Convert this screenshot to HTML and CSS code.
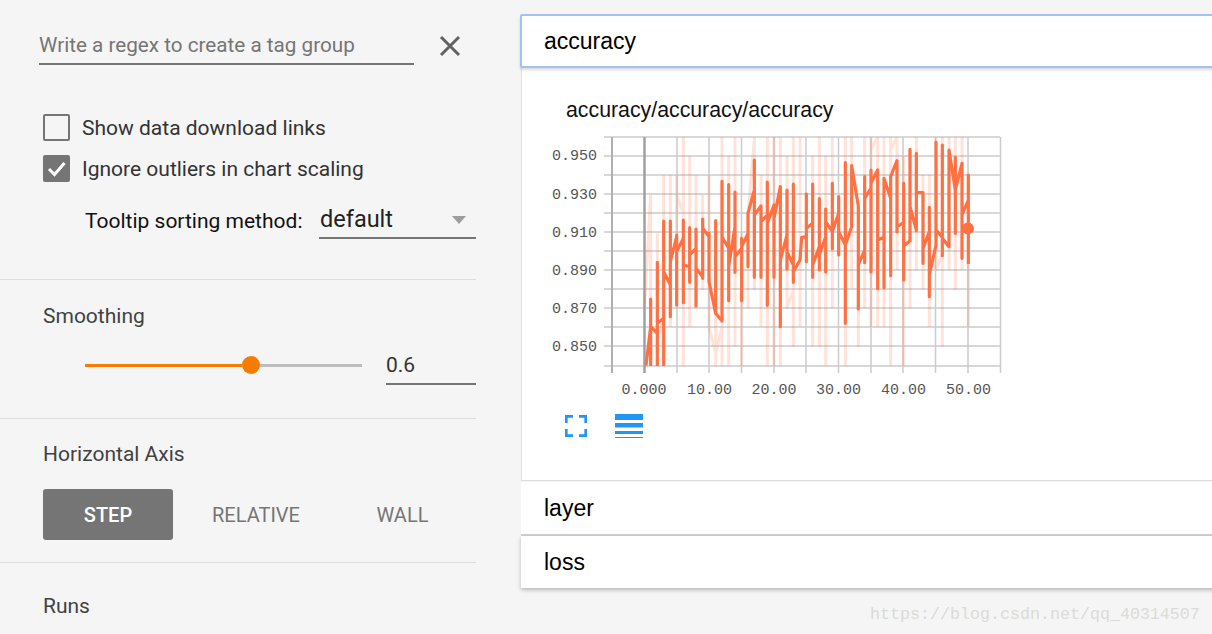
FILE: index.html
```html
<!DOCTYPE html>
<html lang="en">
<head>
<meta charset="utf-8">
<title>TensorBoard scalars</title>
<link rel="stylesheet" href="styles.css">
</head>
<body>
<div class="page">
  <aside class="sidebar">
    <section class="sec sec-top">
      <div class="regex-row">
        <div class="regex-input">Write a regex to create a tag group</div>
        <svg class="close" viewBox="0 0 24 24" width="24" height="24"><path d="M3 3 21 21M21 3 3 21"/></svg>
      </div>
      <label class="check"><span class="box"></span><span>Show data download links</span></label>
      <label class="check check-2"><span class="box box-on"><svg viewBox="0 0 27 27" width="27" height="27"><path d="M6 14 11.500 19.500 21.500 8"/></svg></span><span>Ignore outliers in chart scaling</span></label>
      <div class="tooltip-row">
        <span class="tooltip-label">Tooltip sorting method:</span>
        <div class="select"><span>default</span><i class="arrow"></i></div>
      </div>
    </section>
    <section class="sec sec-smooth">
      <h3>Smoothing</h3>
      <div class="slider-row">
        <div class="slider"><div class="fill"></div><div class="knob"></div><div class="rest"></div></div>
        <div class="num">0.6</div>
      </div>
    </section>
    <section class="sec sec-axis">
      <h3>Horizontal Axis</h3>
      <div class="toggle">
        <span class="btn on">STEP</span>
        <span class="btn rel">RELATIVE</span>
        <span class="btn wall">WALL</span>
      </div>
    </section>
    <section class="sec-runs"><h3>Runs</h3></section>
  </aside>
  <main class="main">
    <div class="cat cat-open">accuracy</div>
    <div class="chart-card">
      <div class="chart-title">accuracy/accuracy/accuracy</div>
      <svg class="chart" viewBox="540 120 470 290" width="470" height="290">
        <defs><clipPath id="plot"><rect x="612" y="137" width="389" height="229"/></clipPath></defs>
        <path class="grid" d="M604 137H1000M604 156H1000M604 175H1000M604 194H1000M604 213H1000M604 232H1000M604 251H1000M604 270H1000M604 289H1000M604 308H1000M604 327H1000M604 346H1000M604 366H1000M677 137V373M709 137V373M741.500 137V373M774 137V373M806 137V373M838.500 137V373M871 137V373M903 137V373M935.500 137V373M968 137V373M1000.500 137V373"/>
        <path class="axis" d="M612 137V373"/>
        <path class="axis-zero" d="M644.500 137V373"/>
        <g clip-path="url(#plot)">
          <g transform="translate(540 120) scale(.33333)">
            <path class="raw" d="M332 225V737M352 340V737M371 165V737M391 165V620M410 165V565M430 50V737M449 108V620M468 165V565M488 225V510M507 165V620M527 300V737M546 50V737M566 108V737M585 50V680M605 340V737M624 280V565M643 50V510M663 165V620M682 50V737M702 50V737M721 50V737M741 108V565M760 50V680M780 50V620M818 108V680M838 50V680M857 108V737M877 50V565M916 50V737M935 50V505M955 258V680M974 50V565M993 50V620M1013 50V620M1032 50V620M1052 50V737M1071 50V450M1091 108V737M1110 88V565M1129 50V450M1149 165V510M1168 165V620M1188 50V450M1207 50V680M1227 50V450M1246 50V510M1266 50V450M1285 165V620M313 560 332 225M352 660 371 600M410 225 430 280M507 620 527 700 546 620M624 280 643 60M740 565 760 510M993 90 1013 50M1052 90 1071 50M1188 450 1207 400"/>
            <path class="smooth" d="M318 737 332 620V537V737V620L352 640V427V737V610L371 595V303V737V455L391 495V303V590V425L410 350V345V555V395L430 355V300V548V435L449 440V323V487V405L468 385V327V558V445L488 470V297V475V325L507 350V340V485L527 580V302V580L546 603V184V603V350L566 385V194V542V440L585 320V216V457V410L605 385V355V542V380L624 340V280V440V280L643 210V120V472V285L663 258V472V305L682 285V186V556V310L702 255V472V295L721 200V620V420L741 345V210V447V395L760 435V192V487V455L780 420L785 352 799 350V222V425V325L818 310V192V472V435L838 380V236V450V405L857 350V267V456V305L877 335V190V386V335L896 280V230V405V335L916 375V128V610V375L935 320V137V322V137L955 258V567V435L974 390V170V428V235L993 205V150V456V190L1013 150V506V360L1032 352V175V503V175L1052 235V170V467V170L1071 122V336V320L1091 308V190V480V378L1110 362V88V260L1129 330V100V332V218L1149 218V430V385L1168 335V262V530V465L1188 375V67V330L1207 352V75V407V355L1227 380V90L1246 210V112V340V210L1266 130V415V285L1285 240V165V432"/>
          </g>
        </g>
        <circle class="dot" cx="968" cy="228.500" r="6"/>
        <text class="tick" x="597" y="160" text-anchor="end">0.950</text>
        <text class="tick" x="597" y="199" text-anchor="end">0.930</text>
        <text class="tick" x="597" y="237" text-anchor="end">0.910</text>
        <text class="tick" x="597" y="275" text-anchor="end">0.890</text>
        <text class="tick" x="597" y="313" text-anchor="end">0.870</text>
        <text class="tick" x="597" y="351" text-anchor="end">0.850</text>
        <text class="tick" x="644" y="394" text-anchor="middle">0.000</text>
        <text class="tick" x="709.500" y="394" text-anchor="middle">10.00</text>
        <text class="tick" x="774" y="394" text-anchor="middle">20.00</text>
        <text class="tick" x="838.500" y="394" text-anchor="middle">30.00</text>
        <text class="tick" x="903.500" y="394" text-anchor="middle">40.00</text>
        <text class="tick" x="968.500" y="394" text-anchor="middle">50.00</text>
      </svg>
      <div class="chart-tools">
        <svg class="icon-full" viewBox="0 0 22 22" width="22" height="22"><path d="M1.300 8V1.300H8M14 1.300H20.700V8M20.700 14V20.700H14M8 20.700H1.300V14"/></svg>
        <svg class="icon-list" viewBox="0 0 28 24" width="28" height="24"><path d="M0 0H28V6H0ZM0 9H28V13.500H0ZM0 17H28V20H0ZM0 23H28V24.500H0Z"/></svg>
      </div>
    </div>
    <div class="cat cat-layer">layer</div>
    <div class="cat cat-loss">loss</div>
    <div class="watermark">https://blog.csdn.net/qq_40314507</div>
  </main>
</div>
</body>
</html>
```
FILE: styles.css
```css
* { box-sizing: border-box; }
html, body { margin: 0; height: 100%; }
body { background: #f5f5f5; overflow: hidden; font-family: Roboto, "Liberation Sans", sans-serif; }
.page { display: flex; width: 1212px; height: 634px; overflow: hidden; }

.sidebar { width: 476px; flex: none; color: #333; }
.sec { border-bottom: 1px solid #ddd; }
h3 { margin: 0; font-size: 21px; font-weight: 400; line-height: 24px; color: #424242; }

.sec-top { height: 280px; padding-top: 26px; }
.regex-row { display: flex; align-items: flex-start; margin-left: 39px; }
.regex-input { width: 375px; height: 39px; border-bottom: 2px solid #757575; font-size: 20.700px; line-height: 38px; color: #757575; }
.close { margin: 8px 0 0 24px; }
.close path { stroke: #616161; stroke-width: 3; fill: none; }

.check { display: flex; align-items: center; gap: 12px; margin: 49px 0 0 43px; height: 27px; font-size: 21px; color: #333; }
.check-2 { margin-top: 14px; }
.box { width: 27px; height: 27px; border: 2.500px solid #757575; border-radius: 2px; flex: none; }
.box-on { background: #757575; border: 0; }
.box-on svg { display: block; }
.box-on path { stroke: #fff; stroke-width: 3; fill: none; }

.tooltip-row { display: flex; align-items: flex-start; margin: 20px 0 0 85px; }
.tooltip-label { font-size: 21px; line-height: 28px; margin-top: 5px; color: #111; width: 234px; flex: none; }
.select { flex: 1; height: 37px; border-bottom: 2px solid #757575; display: flex; justify-content: space-between; font-size: 23.500px; line-height: 34px; color: #222; padding-left: 1px; padding-right: 10px; }
.arrow { width: 0; height: 0; margin-top: 14px; border: 7.500px solid transparent; border-top: 8px solid #9e9e9e; border-bottom: 0; }

.sec-smooth { height: 139px; padding: 24px 0 0 43px; }
.slider-row { display: flex; align-items: flex-start; margin: 22px 0 0 42px; }
.slider { width: 277px; height: 18px; display: flex; align-items: center; margin-top: 6px; }
.fill { width: 157px; height: 3px; background: #f57c00; }
.knob { width: 18px; height: 18px; border-radius: 50%; background: #f57c00; flex: none; }
.rest { flex: 1; height: 3px; background: #bdbdbd; }
.num { width: 90px; height: 35px; margin-left: 24px; border-bottom: 2px solid #757575; font-size: 21px; line-height: 31px; color: #333; }

.sec-axis { height: 144px; padding: 23px 0 0 43px; }
.toggle { display: flex; margin-top: 23px; font-size: 20px; font-weight: 400; color: #757575; }
.btn { height: 51px; line-height: 53px; text-align: center; }
.btn.on { width: 130px; background: #757575; color: #fff; border-radius: 3px; font-weight: 500; }
.btn.rel { width: 166px; }
.btn.wall { width: 127px; }

.sec-runs { padding: 31px 0 0 43px; }

.main { position: relative; width: 740px; margin-left: 45px; padding-top: 14px; font-family: "Liberation Sans", Arial, sans-serif; flex: none; }
.cat { background: #fff; color: #000; font-size: 23px; padding-left: 23px; height: 52px; line-height: 52px; }
.cat-open { height: 54px; margin-left: -1px; border: 2px solid #a3c0f7; border-radius: 2px 0 0 2px; padding-left: 22px; line-height: 50px; box-shadow: 0 2px 3px rgba(0,0,0,.15); position: relative; }
.chart-card { background: #fff; height: 413px; border-left: 1px solid #e0e0e0; border-bottom: 1px solid #ddd; padding: 29px 0 0 18px; }
.chart-title { margin-left: 26px; font-size: 21.300px; line-height: 26px; color: #111; height: 23px; }
.chart { display: block; }
.grid { stroke: #ccc; stroke-width: 1.500; fill: none; }
.axis { stroke: #b0b0b0; stroke-width: 2; fill: none; }
.axis-zero { stroke: #a0a0a0; stroke-width: 2.500; fill: none; }
.raw { stroke: #ff7043; stroke-width: 9; fill: none; opacity: .2; }
.smooth { stroke: #ff7043; stroke-width: 9.500; fill: none; stroke-linejoin: round; }
.dot { fill: #ff7043; }
.tick { font-family: "Liberation Mono", monospace; font-size: 15px; fill: #555; }
.chart-tools { display: flex; align-items: flex-start; margin: 4px 0 0 25px; }
.icon-full { margin-top: 1px; }
.icon-full path { stroke: #2196f3; stroke-width: 2.700; fill: none; }
.icon-list { margin-left: 28px; }
.icon-list path { fill: #2196f3; }
.cat-layer { margin-top: 1px; box-shadow: 0 2px 0 #cfcfcf; }
.cat-loss { margin-top: 2px; box-shadow: 0 2px 4px rgba(0,0,0,.25); }
.watermark { position: absolute; left: 349px; top: 605px; font-family: "Liberation Mono", monospace; font-size: 16.670px; color: #dbdbd7; white-space: nowrap; }
```
